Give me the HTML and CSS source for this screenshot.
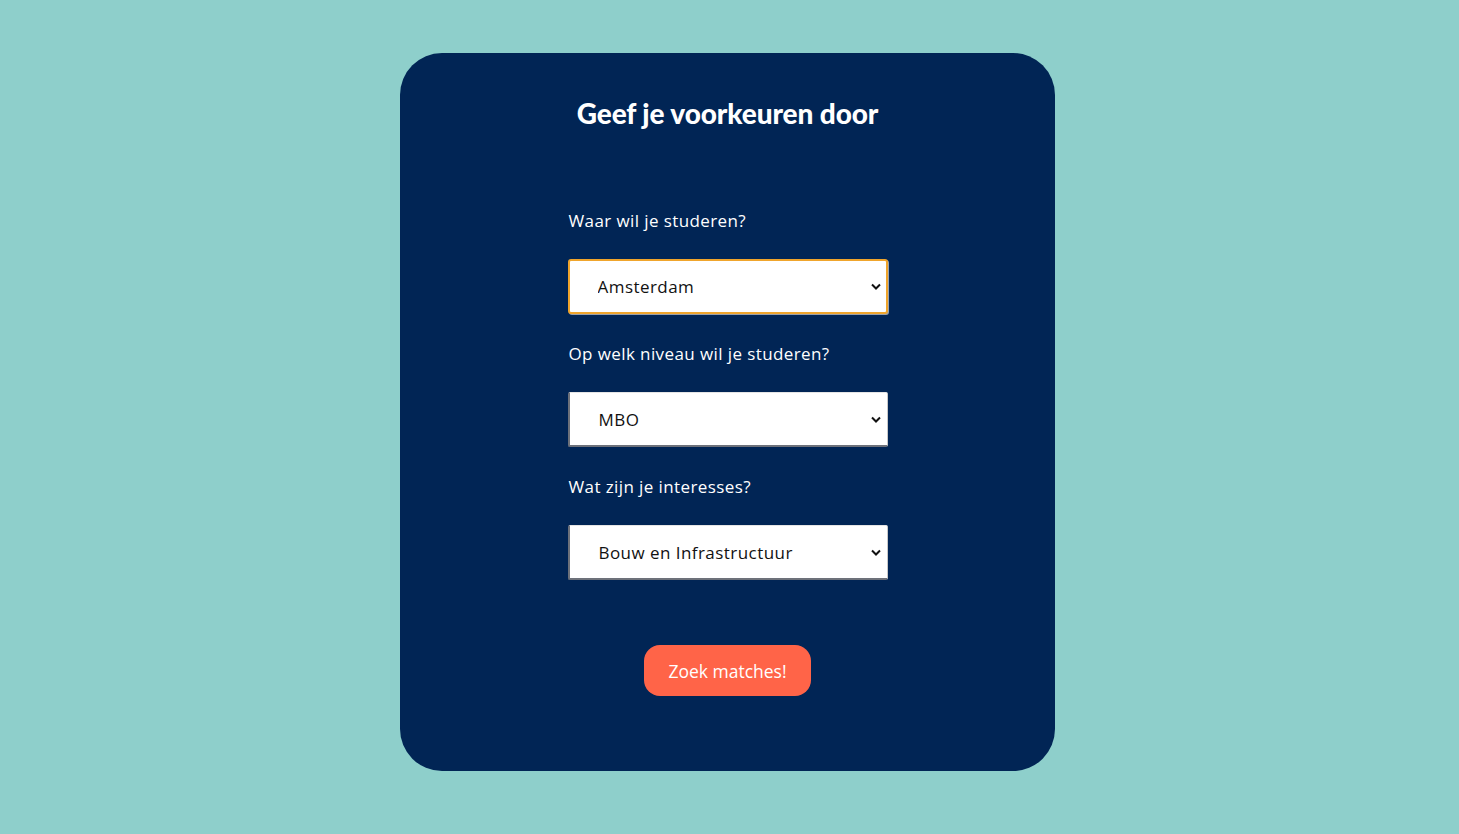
FILE: index.html
```html
<!DOCTYPE html>
<html lang="nl">
<head>
<meta charset="utf-8">
<title>Geef je voorkeuren door</title>
<link rel="stylesheet" href="styles.css">
</head>
<body>
<main class="page">
  <form class="card">
    <h1 class="title">Geef je voorkeuren door</h1>
    <div class="fields">
      <label class="label" for="plaats">Waar wil je studeren?</label>
      <div class="select-wrap">
        <select id="plaats" class="select focused">
          <option>Amsterdam</option>
        </select>
        <svg class="chev" width="10" height="7" viewBox="0 0 10 7"><path d="M1 1.5 L5 5.5 L9 1.5" fill="none" stroke="#111" stroke-width="2"/></svg>
      </div>
      <label class="label" for="niveau">Op welk niveau wil je studeren?</label>
      <div class="select-wrap">
        <select id="niveau" class="select">
          <option>MBO</option>
        </select>
        <svg class="chev" width="10" height="7" viewBox="0 0 10 7"><path d="M1 1.5 L5 5.5 L9 1.5" fill="none" stroke="#111" stroke-width="2"/></svg>
      </div>
      <label class="label" for="interesse">Wat zijn je interesses?</label>
      <div class="select-wrap">
        <select id="interesse" class="select">
          <option>Bouw en Infrastructuur</option>
        </select>
        <svg class="chev" width="10" height="7" viewBox="0 0 10 7"><path d="M1 1.5 L5 5.5 L9 1.5" fill="none" stroke="#111" stroke-width="2"/></svg>
      </div>
    </div>
    <button type="button" class="btn">Zoek matches!</button>
  </form>
</main>
</body>
</html>
```
FILE: styles.css
```css
html, body {
  margin: 0;
  padding: 0;
}
body {
  background: #8ecfcb;
  font-family: "Open Sans", "Lato", sans-serif;
  width: 1459px;
  height: 834px;
  overflow: hidden;
}
.page {
  display: flex;
  justify-content: flex-start;
  padding: 53px 0 0 400px;
}
.card {
  width: 655px;
  height: 718px;
  box-sizing: border-box;
  background: #012555;
  border-radius: 42px;
  display: flex;
  flex-direction: column;
  align-items: center;
  padding-top: 43px;
}
.title {
  margin: 0;
  color: #ffffff;
  font-family: "Lato", sans-serif;
  font-weight: 900;
  font-size: 28px;
  line-height: 34px;
  letter-spacing: -0.1px;
}
.fields {
  display: flex;
  flex-direction: column;
  width: 320px;
  margin-top: 80px;
}
.label {
  color: #ffffff;
  font-family: "Open Sans", sans-serif;
  font-size: 17px;
  line-height: 22px;
  height: 22px;
  margin: 29px 0 27px 1px;
  letter-spacing: 0.4px;
}
.label:first-child {
  margin-top: 0;
}
.select-wrap {
  position: relative;
  height: 55px;
}
.select {
  appearance: none;
  -webkit-appearance: none;
  width: 100%;
  height: 55px;
  box-sizing: border-box;
  margin: 0;
  background: #ffffff;
  color: #111;
  font-family: "Open Sans", sans-serif;
  font-size: 17px;
  letter-spacing: 0.45px;
  padding: 0 0 0 29px;
  border-radius: 2px;
  border-style: solid;
  border-width: 1px 1px 2px 2px;
  border-color: #e5e5e5 #c8c8c8 #6d717a #6d717a;
  outline: none;
}
.select.focused {
  border: 2px solid #f0a52c;
  border-radius: 3px;
  box-shadow: 1px 1px 0 #9aa0aa;
  padding-left: 28px;
}
.chev {
  position: absolute;
  right: 7px;
  top: 24px;
  pointer-events: none;
}
.btn {
  margin-top: 65px;
  width: 167px;
  height: 51px;
  border: none;
  border-radius: 16px;
  background: #ff6448;
  color: #ffffff;
  font-family: "Open Sans", sans-serif;
  font-size: 17.5px;
  font-weight: 500;
  letter-spacing: 0;
  cursor: pointer;
}
```
